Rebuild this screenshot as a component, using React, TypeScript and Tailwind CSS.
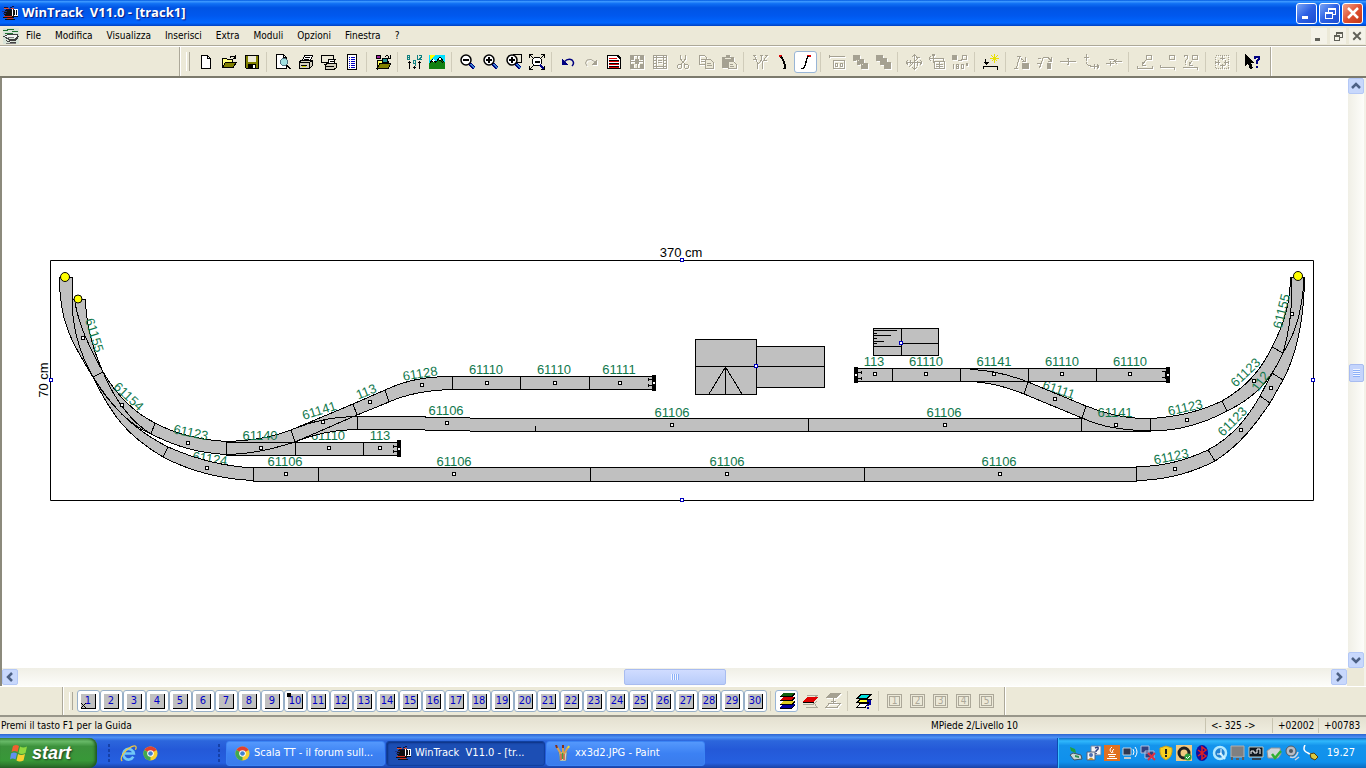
import type { ReactNode } from "react";
import clsx from "clsx";

const menus = ["File", "Modifica", "Visualizza", "Inserisci", "Extra", "Moduli", "Opzioni", "Finestra", "?"];

const Icon = ({ children, off, size = 16 }: { children: ReactNode; off?: boolean; size?: number }) => (
    <svg
        width={size}
        height={size}
        viewBox="0 0 16 16"
        fill="none"
        stroke={off ? "#a5a192" : "#000"}
        shapeRendering="crispEdges"
        aria-hidden="true"
        className={clsx("shrink-0", off && "drop-shadow-[1px_1px_0_#fff]")}
    >
        {children}
    </svg>
);

const Lens = ({ children }: { children?: ReactNode }) => (
    <>
        <path d="M10 10l4.500 4.500" stroke="#000080" strokeWidth="3" />
        <path d="M10.500 10l4 4" stroke="#3a8ad0" />
        <circle cx="6" cy="6" r="5" fill="#fff" strokeWidth="1.500" shapeRendering="auto" />
        {children}
    </>
);

const LocoIcon = ({ size = 16 }: { size?: number }) => (
    <Icon size={size}>
        <path d="M3 5h13v7H4L2 9z" fill="#101010" stroke="none" />
        <path d="M2 2.500h4M4 4.500h8M8 2.500l4-1" stroke="#101040" />
        <path d="M2 3.500h5M9 3.500h3" stroke="#e05030" />
        <path d="M0 6.500h5M1 8.500h3" stroke="#203080" />
        <path d="M10.500 4v7M13 4.500v6M15 4v7M12 10.500h3M12 4.500h3" stroke="#fff" />
        <path d="M2 11.500h8M5 13.500h6" stroke="#d03020" />
        <path d="M1 12.500h11M3 14.500h10" stroke="#101010" />
    </Icon>
);

type Tool = { name: string; off?: boolean; active?: boolean; art: ReactNode };

const toolGroups: Tool[][] = [
    [
        { name: "Nuovo", art: <><path d="M3.500 1.500h6l3 3v10h-9z" fill="#fff" /><path d="M9.500 1.500v3h3" /></> },
        { name: "Apri", art: <><path d="M1.500 13.500v-9h4l1 1h5v3" fill="#ffff80" /><path d="M1.500 13.500l3-5h11l-3.500 5z" fill="#808000" /><path d="M9 3.500q3-3 5 0M14.500 1v3h-3" /></> },
        { name: "Salva", art: <><path d="M1.500 1.500h13v13h-12l-1-1z" fill="#808000" /><path d="M4 2h8v6H4z" fill="#ece9d8" stroke="none" /><path d="M4 10h8v4H4z" fill="#000" stroke="none" /><path d="M9.500 11v3" stroke="#fff" strokeWidth="2" /></> },
    ],
    [
        { name: "Anteprima", art: <><path d="M1.500 .5h7l3 3v11h-10z" fill="#fff" /><path d="M8.500 .5v3h3" /><circle cx="9" cy="8" r="3.500" fill="#a0e0e0" stroke="#507080" /><path d="M11.500 11l4 4" strokeWidth="2" /></> },
        { name: "Stampa", art: <><path d="M4.500 6.500l2-5h8l-2 5z" fill="#fff" /><path d="M7 3.500h5M6 5h5" /><path d="M1.500 7.500l2-1h11v5l-3 2.500h-10z" fill="#d4d0c0" /><path d="M1.500 8.500h10v5M12 8l3-1.500M3 11h6" /><path d="M4 12.500h4" stroke="#d0d000" /></> },
        { name: "Stampa pianta", art: <><path d="M.5 1.500h12v7H.5z" fill="#ece9d8" /><path d="M3 10.500h4" /><path d="M7 9.500l1-4h6l-1 4z" fill="#fff" /><path d="M4.500 10.500l2-1h9v4l-2 1.500h-9z" fill="#d4d0c0" /><path d="M5 12.500h8M9 7h4" /></> },
        { name: "Elenco", art: <><path d="M3.500 .5h9v15h-9z" fill="#fff" /><path d="M5 3.500h1M7 3.500h4M5 5.500h1M7 5.500h4M5 7.500h1M7 7.500h4M5 9.500h1M7 9.500h4M5 11.500h1M7 11.500h4M5 13.500h1M7 13.500h4" stroke="#0000c0" /></> },
    ],
    [
        { name: "Simboli", art: <><path d="M1.500 1.500h4v3h-4z" fill="#a020a0" /><path d="M2 15.500v-9h5l1 1h5v3" fill="#ffff60" /><path d="M7.500 4.500h5v4h-5z" fill="#209090" /><path d="M2 14.500l3-5h11l-3 5z" fill="#808000" /><path d="M10 2.500q3-2 4 1M15.500 1v3h-3" /></> },
    ],
    [
        { name: "Altezze", art: <><path d="M3.500 7v8M8.500 12v3M13.500 7v8M2 8.500h3M12 8.500h3M7 13.500h3" /><path d="M1.500 1v4h2V1zM1.500 3h2M7 6.500h2v5M7 6.500v2.500h2M11.500 1v5M13 1.500h2v2l-2 2h3" stroke="#108080" /></> },
        { name: "Paesaggio", art: <><path d="M0 1h16v14H0z" fill="#00e0ff" stroke="none" /><path d="M1 1h5L1 6z" fill="#ffff00" stroke="none" /><path d="M0 15V10l4-5 3 3 4-5 5 6v6z" fill="#108010" stroke="none" /><path d="M1 9l3-4 3 3 4-5 4 5M3 8l2-2 2 3M10 6l2 1 2 2" /><path d="M4 5.500l1 2M10.500 4l1 2" stroke="#fff" strokeWidth="2" /></> },
    ],
    [
        { name: "Riduci", art: <Lens><path d="M3 6h6" strokeWidth="2" /></Lens> },
        { name: "Ingrandisci", art: <Lens><path d="M3 6h6M6 3v6" strokeWidth="2" /></Lens> },
        { name: "Zoom area", art: <><path d="M7 .5h8.500v8H10" /><Lens><path d="M3 6h6M6 3v6" strokeWidth="2" /></Lens></> },
        { name: "Zoom tutto", art: <><path d="M.5 4V.5H4M.5.5l4 4M12 .5h3.500V4M15.500.5l-4 4M.5 12v3.500H4M.5 15.500l4-4M12 15.500h3.500V12M15.500 15.500l-4-4" /><circle cx="8" cy="7.500" r="4.500" fill="#fff" /><path d="M5.500 8h5" strokeWidth="2" /><path d="M11 11l4 4" stroke="#000080" strokeWidth="2" /></> },
    ],
    [
        { name: "Annulla", art: <><path d="M4 8q4-4 8-2 3 3 0 6" stroke="#000080" strokeWidth="1.500" shapeRendering="auto" /><path d="M2 5v6h6z" fill="#000080" stroke="none" /></> },
        { name: "Ripeti", off: true, art: <><path d="M12 8q-4-4-8-2-3 3 0 6" shapeRendering="auto" /><path d="M14 5v6H8z" fill="#a5a192" stroke="none" /></> },
        { name: "Proprietà", art: <><path d="M1.500 1.500h10l3 3v10h-13z" fill="#fff" strokeWidth="1.500" /><path d="M3 4.500h8M3 7.500h10M3 10.500h10M3 13h10" stroke="#e00000" strokeWidth="1.500" /><path d="M3 6h10M3 9h10M3 12h10" /></> },
        { name: "Finestre", off: true, art: <><path d="M1.500 1.500h13v13h-13zM8 1.500v13M1.500 7.500h13" /><path d="M2 2h3v4H2zM11 2h3v4h-3zM2 10h3v4H2zM11 10h3v4h-3zM6 5h4v5H6z" fill="#a5a192" stroke="none" /></> },
        { name: "Affianca", off: true, art: <><path d="M1.500 1.500h13v13h-13zM4.500 1.500v13M11.500 1.500v13M1.500 3.500h13M1.500 12.500h13" /><path d="M6 6.500h4M6 8.500h4M2 6.500h2M2 9.500h2M12 6.500h2M12 9.500h2" /></> },
        { name: "Taglia", off: true, art: <><path d="M5.500 1v4l5 6M10.500 1v4l-5 6" /><circle cx="4.500" cy="12.500" r="2" /><circle cx="11.500" cy="12.500" r="2" /></> },
        { name: "Copia", off: true, art: <><path d="M1.500 1.500h5l2 2v7h-7zM3 5.500h4M3 7.500h4" /><path d="M7.500 5.500h5l3 3v6h-8zM9 9.500h4M9 11.500h5" fill="#ece9d8" /></> },
        { name: "Incolla", off: true, art: <><path d="M1 3h12v11H1zM5 1h4v3H5z" fill="#a5a192" stroke="none" /><path d="M4 4.500h6" stroke="#ece9d8" /><path d="M7.500 7.500h5l3 3v4h-8zM9 10.500h3M9 12.500h4" fill="#ece9d8" /></> },
    ],
    [
        { name: "Scambi", off: true, art: <path d="M1 1.500h3M2.500 2l3 7v6M8 1.500h3M9.500 2v4l-3 4M14.500 2l-4 6v7M11 6.500h4M1 5.500h3M13 1.500h3" /> },
        { name: "Binario curvo", art: <><path d="M4 1.500h3" stroke="#e00000" strokeWidth="2" /><path d="M6 3q4 4 4 11" strokeWidth="2" /><path d="M8 14.500h3" /></> },
        { name: "Binario flessibile", active: true, art: <><path d="M9 1.500h4" stroke="#e00000" strokeWidth="2" /><path d="M10.500 2q-2 2-2.500 6t-3 7" strokeWidth="1.500" /><path d="M3 14.500h3" /></> },
    ],
    [
        { name: "Etichetta", off: true, art: <><path d="M0 2.500h16M.5 1v3" /><path d="M4.500 6.500h11v8h-11zM6.500 9.500h2v3h-2zM11.500 9.500h2v3h-2z" /></> },
        { name: "Primo piano", off: true, art: <><path d="M1 1h7v6H1zM5 5h7v6H5zM9 9h7v6H9z" fill="#a5a192" stroke="none" /><path d="M4 6.500h4M8 10.500h4" stroke="#ece9d8" strokeDasharray="1 1" /></> },
        { name: "Sfondo", off: true, art: <path d="M1 1h7v6H1zM5 4h7v7H5zM9 8h7v7H9z" fill="#a5a192" stroke="none" /> },
    ],
    [
        { name: "Ruota", off: true, art: <path d="M0 8.500h16M8.500 1v14M3 13L13 3M2 6l-2 2.500 2 2M14 6l2 2.500-2 2M6 3l2.500-2L11 3M6 13l2.500 2 2.500-2M10 3.500h4M4.500 6v4M11.500 7v5" /> },
        { name: "Sposta", off: true, art: <path d="M0 4.500h9M4.500 0v9M2 2L0 4.500 2 7M3 2l1.500-2L6 2M5.500 7.500h10v7h-10zM7 10.500h7M7 12.500h7M10.500 8v6M9 4.500h5v3" /> },
        { name: "Ruota 180", off: true, art: <><path d="M0 1h5v5H0z" fill="#a5a192" stroke="none" /><path d="M10.500 1.500h4v4h-4zM6 6.500h3v-2M1.500 10v5M4.500 10.500h2v4h-2zM4.500 12.500h2M9.500 10.500h2v4h-2zM14 9.500h1v2h-1z" /></> },
    ],
    [
        { name: "Nuovo punto", art: <><path d="M2.500 5v4M0 12.500h15M14.500 12v4M.5 12v3" strokeWidth="1.500" /><path d="M0 8h6l-3 3z" fill="#000" stroke="none" /><path d="M11.500 0v9M7 4.500h9M8.500 1.500l6 6M14.500 1.500l-6 6" stroke="#e8e000" /></> },
    ],
    [
        { name: "Inserisci binario", off: true, art: <><path d="M0 14.500h4M2.500 14l3-11M3 2.500h4M7 4.500l4 3M11.500 3v4H8" /><path d="M8 9h7v6H8z" fill="#a5a192" stroke="none" /></> },
        { name: "Unisci", off: true, art: <><path d="M0 9.500h4M2.500 14l4-11M1 4.500h3M7 3.500h4l3 3M14.500 3v4h-4" /><path d="M10 9h4v6h-4z" fill="#a5a192" stroke="none" /></> },
        { name: "Dividi", off: true, art: <path d="M0 7.500h16M8.500 5v5M7 4.500h2M7 10.500h2" /> },
        { name: "Curva", off: true, art: <path d="M3.500 0v7M1 3.500h5M3 8q1 4 5 4M7 12.500h9M11.500 10v5M14 10.500l2 2-2 2" /> },
        { name: "Allinea", off: true, art: <path d="M0 9.500h8M4.500 7v5M3 5.500h5M9 7.500h7M11 5l-3 2.500 3 2" /> },
    ],
    [
        { name: "Quota", off: true, art: <path d="M9.500 1.500h5v4h-5zM9 6l-4 5M5.500 8v3h3M0 14.500h16M.5 12v3M15.500 12v3" /> },
        { name: "Quota punto", off: true, art: <path d="M9.500 1.500h5v4h-5zM0 13.500h15M14.500 13v3M.5 11v3" /> },
        { name: "Info quota", off: true, art: <path d="M9.500 1.500h5v4h-5zM1.500 3V1.500h3v3l-2 2V9M2.500 10v1M9 7l-3 4M6.500 8v3h3M0 13.500h15M14.500 13v3" /> },
    ],
    [
        { name: "Centra", off: true, art: <><path d="M1.500 1.500h13v13h-13z" strokeDasharray="1 1" /><path d="M8.500 1v5M8.500 10v5M1 8.500h5M10 8.500h5M6 4.500h5M6 11.500h5M4.500 6v5M11.500 6v5" /></> },
    ],
    [
        { name: "Guida rapida", art: <><path d="M0 0v12l3-3 2 6 3-1-2-5h4z" fill="#000" stroke="none" /><path d="M9.500 5V2.500h4v3L12 7.500V10M12 12v2" stroke="#000080" strokeWidth="2" /></> },
    ],
];

const Separator = () => <span className="ml-[3px] mr-1 h-5 w-px shrink-0 bg-[#d0ccba]" />;

const Grip = () => <span className="mr-1 ml-[5px] my-[5px] w-1 shrink-0 self-stretch border-l border-r border-l-white border-r-[#aca899]" />;

const ToolButton = ({ tool }: { tool: Tool }) => (
    <button
        type="button"
        aria-label={tool.name}
        disabled={tool.off}
        className={clsx(
            "flex h-[22px] w-[23px] shrink-0 items-center justify-center rounded-[3px]",
            tool.active && "border border-[#98b5d6] bg-white"
        )}
    >
        <Icon off={tool.off}>{tool.art}</Icon>
    </button>
);

const layerTools: Tool[][] = [
    [
        { name: "Tutti i livelli", active: true, art: <><path d="M4 0h12l-3 4H1z" fill="#106010" stroke="none" /><path d="M4 4h12l-3 4H1z" fill="#d00000" stroke="none" /><path d="M4 8h12l-3 4H1z" fill="#e0d020" stroke="none" /><path d="M4 11h12l-3 4H1z" fill="#0000a0" stroke="none" /><path d="M1 3.500h12l3-3M1 7.500h12l3-3M1 11.500h12l3-3M1 15h12l3-3" /></> },
        { name: "Livello attivo", art: <><path d="M5 2.500h10l-3 3M1 11.500h10l4-3M4 14.500h11l-2-3" stroke="#aca899" /><path d="M5 4h11l-4 5H1z" fill="#e00000" stroke="none" /><path d="M1 9.500h11" /></> },
        { name: "Sposta livello", off: true, art: <><path d="M5 0h11l-4 5H1z" fill="#a5a192" stroke="none" /><path d="M8.500 5v6M6 8.500h5M4 10.500h11l-3 4H1z" /></> },
    ],
    [
        { name: "Info livelli", art: <><path d="M5 1.500h10l-4 4H1z" fill="#00e0e0" /><path d="M4 6.500h11l-3 3H1z" fill="#ffff30" /><path d="M4 10.500h8l-3 4H1z" fill="#fff" /><path d="M11 8h3v3l-2 1v1M12 14v2" stroke="#0000a0" strokeWidth="2" /></> },
    ],
];

/* ------------------------------------------------------------------ */
/* Track plan                                                         */
/* ------------------------------------------------------------------ */

// x, y, rotation, article number
const labels: [number, number, number, string][] = [
    [95, 335, 73, "61155"], [129, 396, 43, "61154"], [191, 432, 12, "61123"], [260, 435, 0, "61140"],
    [285, 461, 0, "61106"], [319, 410, -17, "61141"], [366, 391, -22, "113"], [420, 373, -9, "61128"],
    [486, 369, 0, "61110"], [554, 369, 0, "61110"], [619, 369, 0, "61111"], [446, 410, 0, "61106"],
    [380, 435, 0, "113"], [672, 412, 0, "61106"], [944, 412, 0, "61106"], [454, 461, 0, "61106"],
    [727, 461, 0, "61106"], [999, 461, 0, "61106"], [874, 361, 0, "113"], [926, 361, 0, "61110"],
    [994, 361, 0, "61141"], [1062, 361, 0, "61110"], [1130, 361, 0, "61110"],
    [1115, 412, 0, "61141"], [1185, 407, -13, "61123"], [1171, 456, -12, "61123"], [1232, 421, -45, "61123"],
    [1245, 372, -44, "61123"], [1281, 311, -76, "61155"], [1260, 381, -53, "112"],
];

// these numbers lie partly below a neighbouring track
const coveredLabels: [number, number, number, string][] = [
    [210, 458, 8, "61124"], [328, 435, 0, "61110"], [1059, 389, 19, "61111"],
];

const centres: [number, number][] = [
    [83, 338], [122, 405], [188, 443], [207, 468], [261, 448], [286, 474], [323, 422], [370, 402], [422, 385],
    [487, 383], [555, 383], [620, 383], [329, 448], [380, 448], [447, 423], [672, 425], [945, 425], [454, 474],
    [727, 474], [1000, 474], [875, 374], [926, 374], [994, 374], [1062, 374], [1130, 374], [1055, 399],
    [1116, 425], [1187, 420], [1175, 469], [1241, 430], [1254, 381], [1292, 314], [1271, 388],
];

const handles: [number, number][] = [[682, 260], [682, 500], [51, 380], [1313, 380], [756, 366], [901, 343]];

const Labels = ({ items }: { items: [number, number, number, string][] }) => (
    <>
        {items.map(([x, y, angle, text], i) => (
            <text
                key={i}
                x={x}
                y={y + 5}
                transform={`rotate(${angle} ${x} ${y})`}
                textAnchor="middle"
                className="fill-[#10784c] font-['Liberation_Sans',sans-serif] text-[13px]"
            >
                {text}
            </text>
        ))}
    </>
);

const TrackPlan = () => (
    <svg viewBox="2 78 1346 590" className="block h-full w-full" role="img" aria-label="track1">
        <path d="M50.500 260.500h1263v240H50.500z" fill="none" stroke="#000" />
        <g className="font-['Liberation_Sans',sans-serif] text-[13px]">
            <text x="681" y="257" textAnchor="middle">370 cm</text>
            <text x="43" y="385" textAnchor="middle" transform="rotate(-90 43 380)">70 cm</text>
        </g>
        <Labels items={coveredLabels} />

        <g fill="#c0c0c0" stroke="#000" strokeWidth="1" shapeRendering="crispEdges">
            {/* outer left curve */}
            <path d="M59.500 277C59 325 75 347 93 377C113 418 128 436 163 457C190 471 218 479 253 480.500V468C225 466 200 461 168 447C142 434 120 417 100 388C82 360 72 333 72 277z" />
            {/* inner left curve */}
            <path d="M74 299H85.500C86 326 94 352 103 372C116 394 133 412 155 423C179 436 202 440 226.500 441.500V454.500C198 453 177 447 151 434C127 424 109 402 93 377C80 354 72 330 72 299z" />
            <path d="M75 303C80 329 91 350 103 372C114 398 130 421 151 434M93 377l10-5M151 434l4-11M163 457l5-10" fill="none" />
            {/* lower siding */}
            <path d="M226.500 442.500h172v13h-172zM295.500 442v13M363.500 442v13" />
            <path d="M226.500 441.500C250 441 270 438 291 430L295 442C275 448 255 454 226.500 454.500z" />
            <path d="M226.500 442.500H295M295.500 442.500v13" />
            {/* crossover towards the upper siding */}
            <path d="M295 428.500C315 420 335 416.500 357.500 416.500V429.500C335 430 318 433 295 442z" />
            <path d="M291 430L353 404L357 415L295 442z" />
            <path d="M295 428.500C315 420 335 416.500 357.500 416.500" fill="none" />
            <path d="M353 404L385 390L389 402L357 415z" />
            <path d="M385 390C407 380 425 376.500 452.500 376.500V389.500C430 390 409 393 389 402z" />
            <path d="M452.500 376.500h201v13h-201zM520.500 377v12M589.500 377v12" />
            {/* middle line */}
            <path d="M357.500 416.500h68v13h-68z" />
            <path d="M425.500 417.500h45v13h-45zM470.500 418.500h680v13h-680z" stroke="none" />
            <path d="M425 417.500h45M425 430.500h45M470 418.500h680M470 431.500h680M535.500 426v5M808.500 418v13M1081.500 418v13M1150.500 418v13" fill="none" />
            <path d="M425.500 418v12" stroke="#c0c0c0" />
            {/* front line */}
            <path d="M253.500 467.500h883v14h-883zM318.500 468v13M590.500 468v13M864.500 468v13" />
            {/* upper right siding */}
            <path d="M970 381.500C992 382 1009 388 1024 394L1028 382z" />
            <path d="M857.500 368.500h309v13h-309zM892.500 369v12M960.500 369v12M1028.500 369v12M1096.500 369v12" />
            <path d="M970 369.500C992 370 1010 375 1028 382" fill="none" />
            <path d="M1028 382L1086 406L1082 418L1024 394z" />
            <path d="M1086 406C1106 414 1121 417.500 1140 418.500H1150.500V431C1120 430 1102 427 1082 418z" />
            <path d="M1081.500 418v13" />
            {/* outer right curve */}
            <path d="M1136.500 467C1164 466 1184 461 1208 450C1232 437 1247 419 1260 396L1283 353C1297 325 1302 300 1303 277H1304.500C1304 320 1297 354 1283 380L1270 403C1255 425 1240 445 1215 461C1190 474 1165 480 1136.500 480.500z" />
            {/* inner right curve */}
            <path d="M1150.500 418.500C1178 417 1199 412 1222 401C1245 388 1261 371 1272 347C1286 321 1290 300 1290.500 277H1304C1303 305 1298 330 1283 353C1269 384 1252 399 1227 411C1203 424 1178 431 1150.500 431z" />
            <path d="M1283 353C1289 331 1292 315 1292 277M1222 401l5 10M1272 347l11 6M1272 373l11 7M1260 396l10 7M1208 450l7 11M1150.500 418v13" fill="none" />

            {/* station building */}
            <path d="M695.500 339.500h61v55h-61zM756.500 346.500h68v41h-68z" />
            <path d="M695.500 366.500h129M725.500 366.500v28M725.500 367L709 394M725.500 367L742 394" />
            {/* ramp */}
            <path d="M873.500 328.500h65v27h-65zM901.500 328.500v27M901.500 343.500h37M873.500 346.500h28" />
            <path d="M874 330.500h23M874 333.500h3M874 335.500h17M874 338.500h3M874 341.500h10M874 343.500h3" />
        </g>

        {/* buffer stops */}
        <g shapeRendering="crispEdges">
            <path d="M652 375h4v16h-4zM397 440h4v17h-4zM854 367h4v16h-4zM1166 367h4v16h-4z" />
            <path d="M648 379.500h4M648 385.500h4M648.500 378v3M648.500 384v3M393 446.500h4M393 451.500h4M393.500 445v3M393.500 450v3M858 372.500h4M858 378.500h4M861.500 371v3M861.500 377v3M1162 371.500h4M1162 377.500h4M1165 371v8" stroke="#000" fill="none" />
            <path d="M653 382h2v2h-2zM398 448h2v2h-2zM855 374h2v2h-2zM1167 374h2v2h-2z" fill="#fff" />
        </g>

        <Labels items={labels} />

        <g fill="#fff" stroke="#000" shapeRendering="crispEdges">
            {centres.map(([x, y]) => (
                <rect key={`${x}-${y}`} x={x - 1.5} y={y - 1.5} width="3" height="3" />
            ))}
        </g>
        <g fill="#fff" stroke="#0000c0" shapeRendering="crispEdges">
            {handles.map(([x, y]) => (
                <rect key={`${x}-${y}`} x={x - 1.5} y={y - 1.5} width="3" height="3" />
            ))}
        </g>
        <g fill="#ffff00" stroke="#000">
            <circle cx="65" cy="277" r="4.500" />
            <circle cx="78" cy="299" r="4" />
            <circle cx="1298" cy="276" r="4.500" />
        </g>
    </svg>
);

/* ------------------------------------------------------------------ */
/* Window furniture                                                   */
/* ------------------------------------------------------------------ */

const captionIcons = {
    min: <path d="M3 12.500h6" strokeWidth="3" />,
    restore: <path d="M6.500 7V3.500h7v6H11M6 4h8M3.500 7.500h7v6h-7zM3 8h8" strokeWidth="1.500" />,
    close: <path d="M3 3l10 10M13 3L3 13" strokeWidth="2.500" shapeRendering="auto" />,
};

const captions: { id: keyof typeof captionIcons; name: string }[] = [
    { id: "min", name: "Riduci a icona" },
    { id: "restore", name: "Ripristina" },
    { id: "close", name: "Chiudi" },
];

const arrows = { up: "M2 8l4-4 4 4", down: "M2 4l4 4 4-4", left: "M8 2L4 6l4 4", right: "M4 2l4 4-4 4" };

const ScrollButton = ({ dir, name }: { dir: keyof typeof arrows; name: string }) => (
    <button
        type="button"
        aria-label={name}
        className="flex h-4 w-4 shrink-0 items-center justify-center rounded-[2px] border border-[#b4c8f6] bg-[#c8d8fc]"
    >
        <svg width="12" height="12" viewBox="0 0 12 12" fill="none" stroke="#4d6185" strokeWidth="2.500">
            <path d={arrows[dir]} />
        </svg>
    </button>
);

const ChromeIcon = () => (
    <svg width="15" height="15" viewBox="0 0 16 16" aria-hidden="true" className="shrink-0">
        <circle cx="8" cy="8" r="7.500" fill="#f8d030" />
        <path d="M8 8L1.500 4.250A7.500 7.500 0 0 1 14.500 4.250z" fill="#e04030" />
        <path d="M8 8L1.500 4.250A7.500 7.500 0 0 0 8 15.500z" fill="#40a850" />
        <circle cx="8" cy="8" r="3.500" fill="#fff" />
        <circle cx="8" cy="8" r="2.500" fill="#4080d0" />
    </svg>
);

const ExplorerIcon = () => (
    <svg width="17" height="17" viewBox="0 0 16 16" fill="none" aria-hidden="true">
        <path d="M12.500 11A5 5 0 1 1 13 8H4" stroke="#70c8f8" strokeWidth="2.500" />
        <path d="M2 15C-1 12 5 4 11 1.500c4-1.500 5 0 3.500 3" stroke="#f0c840" strokeWidth="1.200" />
    </svg>
);

const PaintIcon = () => (
    <svg width="16" height="16" viewBox="0 0 16 16" aria-hidden="true" className="shrink-0">
        <path d="M4 7h8l-1 9H5z" fill="#c8d8d0" stroke="#607060" strokeWidth=".5" />
        <path d="M6 9L2 2M8 9V1M9 9l4-7" stroke="#d8a050" strokeWidth="2" />
        <path d="M2 3L1 0M8 3V0" stroke="#803020" strokeWidth="2" />
        <path d="M13 3l1-2" stroke="#e8e040" strokeWidth="2" />
        <path d="M6 9v6M9 9v6" stroke="#e05030" strokeWidth="1.500" />
        <path d="M7.500 8v6" stroke="#40a040" strokeWidth="1.500" />
    </svg>
);

const Flag = () => (
    <svg width="18" height="18" viewBox="0 0 18 18" aria-hidden="true">
        <path d="M3 2q3-2 6 0L7.500 8q-3-2-6 0z" fill="#f06030" />
        <path d="M10 2.500q3 2 7 0L15.500 9q-4 2-7 0z" fill="#90d840" />
        <path d="M1 9.500q3-2 6 0L5.500 15.500q-3-2-5.500 0z" fill="#6090f0" />
        <path d="M8 10q3 2 7 0L13.500 16.500q-4 2-7 0z" fill="#f8d030" />
    </svg>
);

const trayIcons: ReactNode[] = [
    <><path d="M2 2l5 2 1 4-5-2z" fill="#20a040" /><path d="M5 8l8 2 1 4-8 1-4-5z" fill="#c8d8d8" stroke="#405060" /><path d="M7 10l4 1v2l-4-1z" fill="#309050" /></>,
    <><path d="M5 1h10v9H5z" fill="#f4f4f4" stroke="#7080a0" /><path d="M1 7h8v8H1z" fill="#f4f4f4" stroke="#506080" /><circle cx="5" cy="10" r="2" fill="#5070b0" /><path d="M2 15q3-5 6 0" fill="#c09030" /><path d="M9 3q4-2 3 1l-2 2v1M10 8v1" fill="none" stroke="#304080" strokeWidth="1.500" /></>,
    <><path d="M0 0h16v16H0z" fill="#e07020" /><path d="M8 2q-4 3 0 6M10 4q-3 2-1 4M4 9.500h8M5 11.500h6M3 13.500h10" fill="none" stroke="#fff" /></>,
    <><path d="M1 3h8v7H1z" fill="#303850" stroke="#c0d0e0" /><path d="M2 12h7v2H2z" fill="#c0c8d0" /><path d="M11 4q2 3 0 6M13 2q4 5 0 10" fill="none" stroke="#fff" /></>,
    <><path d="M1 1h8v7H1zM5 6h9v7H5z" fill="#304080" stroke="#b0c0e0" /><path d="M8 8l7 7M15 8l-7 7" stroke="#e03040" strokeWidth="2" /></>,
    <><path d="M8 1l6 2v4q0 5-6 8-6-3-6-8V3z" fill="#f8d020" stroke="#c8a020" /><path d="M8 4v5M8 10v2" stroke="#202020" strokeWidth="2" /></>,
    <><path d="M0 0h16v16H0z" fill="#f0c880" /><circle cx="8" cy="8" r="5" fill="none" stroke="#202020" strokeWidth="3" /><circle cx="12" cy="12" r="3.500" fill="#30a040" /><path d="M10 12l1.500 1.500L14 11" fill="none" stroke="#fff" /></>,
    <><ellipse cx="8" cy="8" rx="6" ry="8" fill="#1010a0" /><path d="M4 5l8 6-4 3V2l4 3-8 6" fill="none" stroke="#e02020" strokeWidth="1.500" /></>,
    <><circle cx="8" cy="8" r="6" fill="#2080d0" stroke="#b0e8ff" strokeWidth="2.500" /><path d="M8 8l5 6" stroke="#d0f0ff" strokeWidth="2" /><path d="M9 4v5H5" stroke="#fff" fill="none" /></>,
    <><path d="M1 1h13v11H1z" fill="#808080" stroke="#b0b0b0" /><path d="M2 12v3M6 14h3M13 12v3" stroke="#606060" strokeWidth="2" /></>,
    <><path d="M1 2h14v10H1z" fill="#101820" stroke="#c0c8c0" /><path d="M3 9V6h3v2h3V4h3v5" fill="none" stroke="#fff" /><path d="M4 14h9" stroke="#304050" strokeWidth="2" /></>,
    <><path d="M1 6l4-3h9l1 6-3 4H2z" fill="#d0d4d8" stroke="#909498" /><path d="M6 9l3 4 6-7" fill="none" stroke="#30b030" strokeWidth="2.500" /></>,
    <><circle cx="7" cy="6" r="5" fill="#b8bcc4" stroke="#505860" /><circle cx="7" cy="6" r="2" fill="#505860" /><path d="M6 12q6 2 8-5M11 15l4-3" fill="none" stroke="#d0d4e0" strokeWidth="1.500" /></>,
    <><path d="M3 0q-3 6 3 8l5 3" fill="none" stroke="#fff" strokeWidth="1.500" /><path d="M8 9l4-1 4 4-3 3-4-2z" fill="#d8c840" stroke="#504010" /></>,
];

const TaskButton = ({ icon, label, active }: { icon: ReactNode; label: string; active?: boolean }) => (
    <button
        type="button"
        className={clsx(
            "flex h-[25px] w-[159px] shrink-0 items-center gap-1 rounded-[3px] border pl-2 text-left text-[11px] text-white",
            active
                ? "border-[#1040a0] bg-[#1c4eb4] shadow-[inset_1px_1px_2px_#0c3080]"
                : "border-[#3c84f4] bg-linear-to-b from-[#5498fc] via-[#3c81f3] to-[#3a7cec]"
        )}
    >
        {icon}
        <span className="whitespace-pre">{label}</span>
    </button>
);

const Dots = () => <span className="mx-1 h-5 w-[5px] shrink-0 bg-[radial-gradient(#1540a8_1px,transparent_1px)] bg-size-[4px_5px]" />;

const App = () => {
    return (
        <div className="flex h-screen flex-col overflow-hidden bg-[#ece9d8] font-['DejaVu_Sans_Condensed','DejaVu_Sans',sans-serif] text-[10px] text-black select-none">
            {/* Title bar */}
            <header className="flex h-[26px] shrink-0 items-center justify-between bg-[linear-gradient(#0058e0_0%,#3c98ff_6%,#1070f4_14%,#0054e4_30%,#0058ee_60%,#0066ff_88%,#0040c0_100%)] pl-0.5 pr-[3px]">
                <div className="flex items-center gap-1">
                    <LocoIcon />
                    <h1 className="font-['Open_Sans',sans-serif] text-[13px] font-bold whitespace-pre text-white [text-shadow:1px_1px_1px_#0a1880]">WinTrack  V11.0 - [track1]</h1>
                </div>
                <div className="flex gap-0.5">
                    {captions.map(({ id, name }) => (
                        <button
                            key={id}
                            type="button"
                            aria-label={name}
                            className={clsx(
                                "flex h-[21px] w-[21px] items-center justify-center rounded-[3px] border border-white",
                                id === "close"
                                    ? "bg-linear-to-br from-[#f0a088] via-[#e05030] to-[#c03818]"
                                    : "bg-linear-to-br from-[#7ca4f4] via-[#2c60e4] to-[#1c4cd0]"
                            )}
                        >
                            <svg width="16" height="16" viewBox="0 0 16 16" fill="none" stroke="#fff" shapeRendering="crispEdges">{captionIcons[id]}</svg>
                        </button>
                    ))}
                </div>
            </header>

            {/* Menu bar */}
            <nav className="flex h-5 shrink-0 items-center justify-between border-b border-[#aca899] pl-[3px]">
                <div className="flex items-center">
                    <Icon>
                        <path d="M0 0h16v16H0z" fill="#d8e4d8" stroke="none" />
                        <path d="M0 2.500h5M4 1.500h7M9 3.500h6M2 5.500h8" stroke="#207030" />
                        <path d="M1 8.500l4-2h9l1 2-3 3H7zM1 8.500l6 4h5l3-2M3 12.500l5 2h5" fill="#f4f4f4" stroke="#404040" />
                        <path d="M3 15.500h10M5 9.500h6" stroke="#808080" />
                    </Icon>
                    {menus.map((menu) => (
                        <button key={menu} type="button" className="px-[7px]">{menu}</button>
                    ))}
                </div>
                <div className="flex gap-[3px] pr-px">
                    {captions.map(({ id, name }) => (
                        <button key={id} type="button" aria-label={`${name} documento`} className="flex h-4 w-4 items-center justify-center bg-[#f4f2e8]">
                            <svg width="12" height="12" viewBox="0 0 16 16" fill="none" stroke="#606058" shapeRendering="crispEdges">{captionIcons[id]}</svg>
                        </button>
                    ))}
                </div>
            </nav>

            {/* Main toolbar */}
            <div className="flex h-8 shrink-0 items-center border-t border-b-2 border-t-white border-b-[#7c7a6c]">
                <span className="ml-[179px] w-px self-stretch bg-[#aca899]" />
                <span className="w-px self-stretch bg-white" />
                <Grip />
                {toolGroups.map((group, i) => (
                    <div key={i} className="flex items-center">
                        {i > 0 && <Separator />}
                        {group.map((tool) => <ToolButton key={tool.name} tool={tool} />)}
                    </div>
                ))}
                <span className="ml-1.5 w-0.5 self-stretch border-l border-r border-l-[#aca899] border-r-white" />
            </div>

            {/* Drawing area */}
            <main className="flex min-h-0 flex-1 flex-col border-l-2 border-l-[#8c8a7c] border-r-2 border-r-[#f4f2e8]">
                <div className="flex min-h-0 flex-1">
                    <div className="min-w-0 flex-1 bg-white">
                        <TrackPlan />
                    </div>
                    <div className="flex w-4 shrink-0 flex-col items-center justify-between bg-linear-to-r from-[#f0efe6] to-[#fdfdfa]">
                        <ScrollButton dir="up" name="Scorri su" />
                        <div className="flex h-[18px] w-[15px] items-center justify-center rounded-[2px] border border-[#a8bcf0] bg-[#c4d4fc]">
                            <span className="h-2 w-[7px] bg-[repeating-linear-gradient(#f0f4ff_0_1px,#8cb0f8_1px_2px)]" />
                        </div>
                        <ScrollButton dir="down" name="Scorri giù" />
                    </div>
                </div>
                <div className="flex h-[18px] shrink-0 pr-[17px]">
                    <div className="flex flex-1 items-center justify-between bg-linear-to-b from-[#f0efe6] to-[#fdfdfa]">
                        <ScrollButton dir="left" name="Scorri a sinistra" />
                        <div className="flex h-4 w-[102px] items-center justify-center rounded-[2px] border border-[#a8bcf0] bg-linear-to-b from-[#d0dcff] to-[#b8ccfa]">
                            <span className="h-1.5 w-2 bg-[repeating-linear-gradient(90deg,#f0f4ff_0_1px,#8cb0f8_1px_2px)]" />
                        </div>
                        <ScrollButton dir="right" name="Scorri a destra" />
                    </div>
                </div>
            </main>

            {/* Layer toolbar */}
            <div className="flex h-[31px] shrink-0 items-center border-t border-b-2 border-t-white border-b-[#98968a]">
                <span className="ml-[62px] w-px self-stretch bg-[#aca899]" />
                <span className="w-px self-stretch bg-white" />
                <Grip />
                {Array.from({ length: 30 }, (_, i) => i + 1).map((n) => (
                    <button
                        key={n}
                        type="button"
                        className="relative flex h-[22px] w-[23px] shrink-0 items-center justify-center rounded-[3px] border border-[#98b0c8] bg-white"
                    >
                        <span className="flex h-[15px] w-[15px] items-center justify-center border-r border-b border-black bg-[#c0c0c0] text-[11px] leading-3 text-[#0000c8]">
                            {n}
                        </span>
                        {n === 1 && (
                            <svg width="5" height="5" viewBox="0 0 5 5" stroke="#000" className="absolute bottom-[3px] left-[3px]"><path d="M0 0l5 5M5 0L0 5" /></svg>
                        )}
                        {n === 10 && <span className="absolute top-0.5 left-0.5 h-1 w-1 bg-black" />}
                    </button>
                ))}
                {layerTools.map((group, i) => (
                    <div key={i} className="flex items-center">
                        <Separator />
                        {group.map((tool) => <ToolButton key={tool.name} tool={tool} />)}
                    </div>
                ))}
                <Separator />
                {[1, 2, 3, 4, 5].map((n) => (
                    <button key={n} type="button" disabled className="flex h-[22px] w-[23px] shrink-0 items-center justify-center">
                        <span className="flex h-[14px] w-[15px] items-center justify-center border-[3px] border-double border-[#aca899] text-[10px] leading-none text-[#aca899]">{n}</span>
                    </button>
                ))}
                <span className="ml-1.5 w-0.5 self-stretch border-l border-r border-l-[#aca899] border-r-white" />
            </div>

            {/* Status bar */}
            <footer className="flex h-[17px] shrink-0 items-center bg-linear-to-b from-[#e4e0d0] to-[#f0eee0]">
                <span className="flex-1 pl-px">Premi il tasto F1 per la Guida</span>
                <span className="w-[274px]">MPiede 2/Livello 10</span>
                <span className="w-[67px] border-l border-[#c8c4b0] pl-[5px]">&lt;- 325 -&gt;</span>
                <span className="w-[46px] border-l border-[#c8c4b0] pl-[5px]">+02002</span>
                <span className="w-12 border-l border-[#c8c4b0] pl-[5px]">+00783</span>
            </footer>

            {/* Taskbar */}
            <div className="flex h-[34px] shrink-0 items-center bg-[linear-gradient(#2c64d0_0%,#4c90f4_10%,#2c66dc_20%,#2459d8_45%,#2560e0_85%,#1941a5_100%)] pt-1">
                <button
                    type="button"
                    className="flex h-full w-[97px] shrink-0 items-center gap-1 rounded-r-lg bg-[linear-gradient(#4c9c4c_0%,#66b866_12%,#3c923c_28%,#389838_75%,#286828_100%)] pl-2.5 font-['Liberation_Sans',sans-serif] text-[18px] font-bold text-white italic shadow-[inset_-2px_0_3px_#205820] [text-shadow:1px_1px_2px_#203820]"
                >
                    <Flag />
                    start
                </button>
                <div className="flex w-[129px] shrink-0 items-center pl-1.5">
                    <Dots />
                    <button type="button" aria-label="Internet Explorer" className="ml-1"><ExplorerIcon /></button>
                    <button type="button" aria-label="Google Chrome" className="ml-1.5"><ChromeIcon /></button>
                    <span className="flex-1" />
                    <Dots />
                </div>
                <div className="flex flex-1 gap-px">
                    <TaskButton icon={<ChromeIcon />} label="Scala TT - il forum sull..." />
                    <TaskButton icon={<LocoIcon />} label="WinTrack  V11.0 - [tr..." active />
                    <TaskButton icon={<PaintIcon />} label="xx3d2.JPG - Paint" />
                </div>
                <div className="flex h-full w-[309px] shrink-0 items-center gap-0.5 border-l border-[#0c4cb0] bg-[linear-gradient(#1070c8_0%,#30b8fc_10%,#1494ec_25%,#0f90ec_80%,#0c6cc0_100%)] pl-2.5 shadow-[inset_1px_0_0_#38c0ff]">
                    {trayIcons.map((art, i) => (
                        <svg key={i} width="16" height="16" viewBox="0 0 16 16" aria-hidden="true" className="shrink-0">{art}</svg>
                    ))}
                    <time className="flex-1 pr-1 text-center text-[11px] text-white">19.27</time>
                </div>
            </div>
        </div>
    );
};

export default App;
